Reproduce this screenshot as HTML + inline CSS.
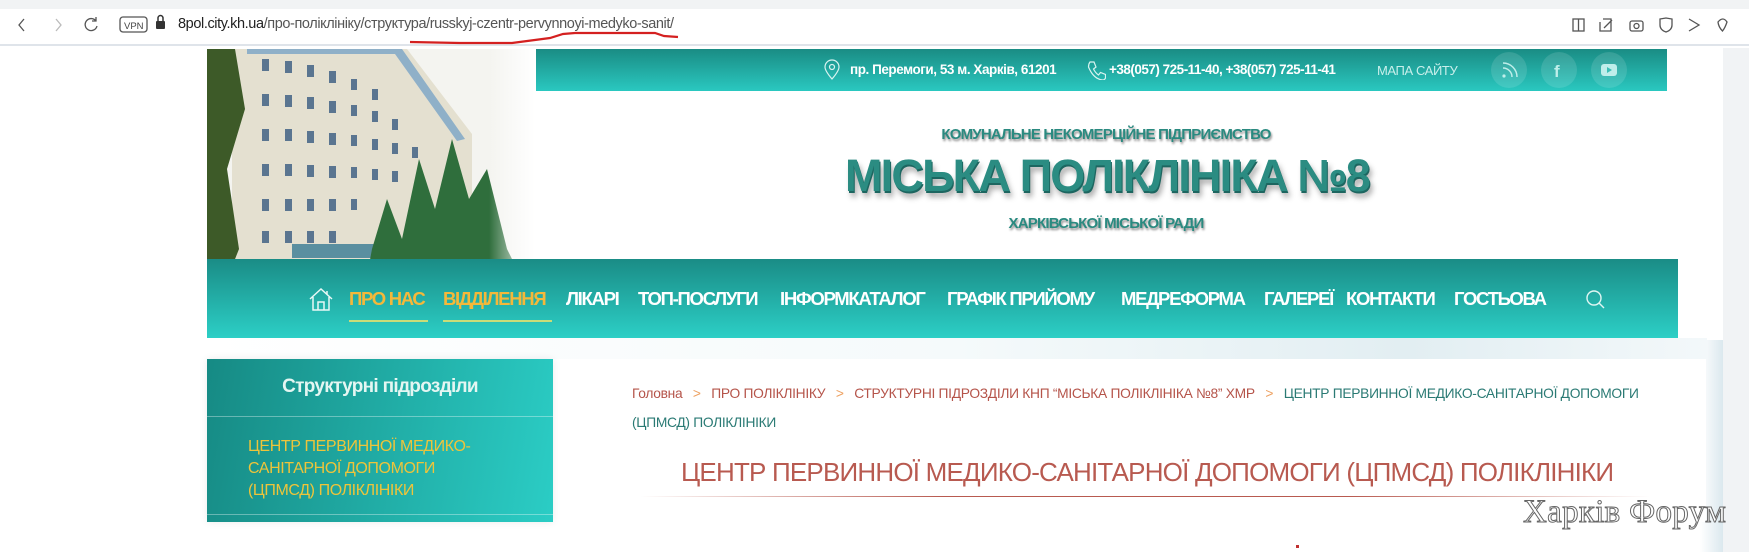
<!DOCTYPE html>
<html><head><meta charset="utf-8"><style>
*{margin:0;padding:0;box-sizing:border-box}
body{width:1749px;height:552px;overflow:hidden;background:#fff;font-family:"Liberation Sans","DejaVu Sans",sans-serif;position:relative}
.a{position:absolute;white-space:nowrap}
.nav span{position:absolute;top:288px;font-weight:bold;font-size:18.5px;letter-spacing:-1.3px;color:#fff}
.bc{font-size:13.8px;letter-spacing:-0.3px}
</style></head><body>
<div class="a" style="left:0;top:0;width:1749px;height:9px;background:#f1f3f4"></div>
<div class="a" style="left:0;top:9px;width:1749px;height:37px;background:#fff;border-bottom:2px solid #dfe4ea"></div>
<svg class="a" style="left:0;top:0" width="1749" height="50">
<g fill="none" stroke="#555" stroke-width="1.3">
<path d="M24 19 L19 25 L24 31"/>
<path d="M56 19 L61 25 L56 31" stroke="#bbb"/>
<path d="M96 21 A6 6 0 1 0 97 26 M96 17 L96 21 L92 21"/>
<rect x="120" y="17" width="27" height="15" rx="3"/>
<rect x="1573" y="19" width="11" height="12"/><path d="M1578.5 19 V31"/>
<path d="M1603 19 h8 v12 h-11 v-9 M1604 28 l8 -8"/>
<rect x="1630" y="21" width="13" height="10" rx="2"/><circle cx="1636.5" cy="26" r="2.5"/>
<path d="M1660 19 l6 -1 l6 1 v6 q0 5 -6 7 q-6 -2 -6 -7z"/>
<path d="M1689 19 l10 6 l-10 6"/>
<path d="M1718 22 q5 -6 9 0 q-2 6 -4.5 9 q-4 -4 -4.5 -9z"/>
</g>
<text x="124" y="29" font-size="9.5" font-family="Liberation Sans" fill="#444">VPN</text>
<rect x="156" y="21" width="9" height="8" rx="1" fill="#333"/><path d="M158 21 v-3 a2.5 2.5 0 0 1 5 0 v3" fill="none" stroke="#333" stroke-width="1.5"/>
<path d="M410 42 L460 43 L512 43 L550 38 L563 34 L575 33 L655 33 L664 36 L678 37" fill="none" stroke="#d42020" stroke-width="2.2"/>
</svg>
<div class="a" style="left:178px;top:16px;font-size:14.5px;color:#555;letter-spacing:-0.4px"><span style="color:#222">8pol.city.kh.ua</span>/про-поліклініку/структура/russkyj-czentr-pervynnoyi-medyko-sanit/</div>
<div class="a" style="left:1723px;top:48px;width:26px;height:504px;background:#f1f3f5"></div>
<div class="a" style="left:1700px;top:340px;width:23px;height:212px;background:linear-gradient(90deg,#fff,#dbe8ee)"></div>
<svg class="a" style="left:207px;top:49px" width="328" height="281">
<defs><linearGradient id="sky" x1="0" x2="1"><stop offset="0.86" stop-color="#fff" stop-opacity="0"/><stop offset="1" stop-color="#fff"/></linearGradient></defs>
<rect width="328" height="281" fill="#f4f4f0"/>
<polygon points="25,0 200,0 265,85 265,240 25,250" fill="#e4e0d0"/>
<polygon points="40,0 195,0 258,90 250,92 188,5 40,5" fill="#8fb0c8"/>
<g fill="#5a7590">
<rect x="55" y="10" width="7" height="12"/><rect x="78" y="12" width="7" height="12"/><rect x="100" y="16" width="7" height="12"/><rect x="122" y="22" width="7" height="12"/><rect x="144" y="30" width="6" height="11"/><rect x="165" y="40" width="6" height="11"/>
<rect x="55" y="45" width="7" height="12"/><rect x="78" y="46" width="7" height="12"/><rect x="100" y="48" width="7" height="12"/><rect x="122" y="52" width="7" height="12"/><rect x="144" y="56" width="6" height="11"/><rect x="165" y="62" width="6" height="11"/><rect x="185" y="70" width="6" height="11"/>
<rect x="55" y="80" width="7" height="12"/><rect x="78" y="80" width="7" height="12"/><rect x="100" y="82" width="7" height="12"/><rect x="122" y="84" width="7" height="12"/><rect x="144" y="86" width="6" height="11"/><rect x="165" y="90" width="6" height="11"/><rect x="185" y="94" width="6" height="11"/><rect x="205" y="98" width="6" height="11"/>
<rect x="55" y="115" width="7" height="12"/><rect x="78" y="115" width="7" height="12"/><rect x="100" y="116" width="7" height="12"/><rect x="122" y="117" width="7" height="12"/><rect x="144" y="118" width="6" height="11"/><rect x="165" y="120" width="6" height="11"/><rect x="185" y="122" width="6" height="11"/>
<rect x="55" y="150" width="7" height="12"/><rect x="78" y="150" width="7" height="12"/><rect x="100" y="150" width="7" height="12"/><rect x="122" y="150" width="7" height="12"/><rect x="144" y="150" width="6" height="11"/>
<rect x="55" y="182" width="7" height="12"/><rect x="78" y="182" width="7" height="12"/><rect x="100" y="182" width="7" height="12"/><rect x="122" y="182" width="7" height="12"/>
</g>
<rect x="85" y="195" width="100" height="14" fill="#5a8fa0"/>
<path d="M0 0 L28 0 L38 60 L20 120 L32 200 L0 281z" fill="#3d5a28"/>
<path d="M150 281 L165 200 L180 150 L195 190 L212 110 L228 160 L245 90 L262 150 L280 120 L300 200 L320 240 L328 281z" fill="#2f6e3c"/>
<path d="M0 281 L0 235 Q80 205 160 225 Q230 205 328 245 L328 281z" fill="#6a9c3a"/>
<rect width="328" height="281" fill="url(#sky)"/>
</svg>
<div class="a" style="left:536px;top:49px;width:1131px;height:42px;background:linear-gradient(180deg,#1a8c84,#2ac8c0)"></div>
<svg class="a" style="left:822px;top:59px" width="20" height="22"><path d="M10 20 C4 13 3 10 3 8 a7 7 0 0 1 14 0 c0 2 -1 5 -7 12z M10 5.5 a2.5 2.5 0 1 1 0 5 a2.5 2.5 0 1 1 0 -5" fill="none" stroke="#d8f3f0" stroke-width="1.2"/></svg>
<div class="a" style="left:850px;top:62px;font-size:13.5px;font-weight:bold;color:#fff;letter-spacing:-0.45px">пр. Перемоги, 53 м. Харків, 61201</div>
<svg class="a" style="left:1086px;top:60px" width="20" height="20"><path d="M4 2 l4 0 l2 5 l-2.5 2 q2 4 5 6 l2 -2.5 l5 2 v3.5 q-1 2 -3 2 q-9 -1 -14 -13 q0 -3 1.5 -5z" fill="none" stroke="#d8f3f0" stroke-width="1.2"/></svg>
<div class="a" style="left:1109px;top:62px;font-size:13.5px;font-weight:bold;color:#fff;letter-spacing:-0.5px">+38(057) 725-11-40, +38(057) 725-11-41</div>
<div class="a" style="left:1377px;top:63px;font-size:13px;color:#c8efeb;letter-spacing:-0.4px">МАПА САЙТУ</div>
<div class="a" style="left:1491px;top:52px;width:36px;height:36px;border-radius:50%;background:rgba(255,255,255,.12)"></div>
<div class="a" style="left:1541px;top:52px;width:36px;height:36px;border-radius:50%;background:rgba(255,255,255,.12)"></div>
<div class="a" style="left:1591px;top:52px;width:36px;height:36px;border-radius:50%;background:rgba(255,255,255,.12)"></div>
<svg class="a" style="left:1491px;top:52px" width="140" height="36">
<g fill="none" stroke="#bfeeea" stroke-width="1.5"><path d="M12 16 a9 9 0 0 1 9 9 M12 11 a14 14 0 0 1 14 14"/></g><circle cx="13" cy="24" r="1.6" fill="#bfeeea"/>
<text x="63" y="25" font-size="17" font-weight="bold" fill="#bfeeea" font-family="Liberation Sans">f</text>
<rect x="110" y="12" width="16" height="12" rx="3" fill="#bfeeea"/><path d="M116 15 v6 l5 -3z" fill="#3cbfb6"/>
</svg>
<div class="a" style="left:0;width:2212px;top:126px;text-align:center;font-size:15px;font-weight:bold;color:#2a8a80;letter-spacing:-0.8px;text-shadow:1px 2px 2px #888">КОМУНАЛЬНЕ НЕКОМЕРЦІЙНЕ ПІДПРИЄМСТВО</div>
<div class="a" style="left:0;width:2214px;top:150px;text-align:center;font-size:45px;font-weight:bold;color:#2b8c82;letter-spacing:-1.8px;text-shadow:1px 2px 0 #1d6660,3px 6px 6px #aaa">МІСЬКА ПОЛІКЛІНІКА №8</div>
<div class="a" style="left:0;width:2212px;top:215px;text-align:center;font-size:15px;font-weight:bold;color:#2a8a80;letter-spacing:-0.8px;text-shadow:1px 2px 2px #888">ХАРКІВСЬКОЇ МІСЬКОЇ РАДИ</div>
<div class="a" style="left:207px;top:259px;width:1471px;height:79px;background:linear-gradient(180deg,#1a8c86,#2ccfc6)"></div>
<div class="a" style="left:207px;top:338px;width:1500px;height:21px;background:linear-gradient(90deg,#fff,#f5fafb 50%,#e2eef2 80%,#f3f8fa)"></div>
<svg class="a" style="left:308px;top:286px" width="26" height="26"><path d="M2 13 L13 3 L24 13 M5 11 V24 H21 V11 M10 24 V16 H16 V24 M19 5 V8" fill="none" stroke="#e8f8f6" stroke-width="1.5"/></svg>
<div class="nav">
<span style="left:349px;color:#f4b83a">ПРО НАС</span>
<span style="left:443px;color:#f4b83a">ВІДДІЛЕННЯ</span>
<span style="left:566px">ЛІКАРІ</span>
<span style="left:638px">ТОП-ПОСЛУГИ</span>
<span style="left:780px">ІНФОРМКАТАЛОГ</span>
<span style="left:947px">ГРАФІК ПРИЙОМУ</span>
<span style="left:1121px">МЕДРЕФОРМА</span>
<span style="left:1264px">ГАЛЕРЕЇ</span>
<span style="left:1346px">КОНТАКТИ</span>
<span style="left:1454px">ГОСТЬОВА</span>
</div>
<div class="a" style="left:349px;top:320px;width:79px;height:2px;background:#c9dc78"></div>
<div class="a" style="left:443px;top:320px;width:109px;height:2px;background:#c9dc78"></div>
<svg class="a" style="left:1585px;top:289px" width="22" height="22"><circle cx="9" cy="9" r="7" fill="none" stroke="#e0f6f3" stroke-width="1.4"/><path d="M14 14 L19 19" stroke="#e0f6f3" stroke-width="1.4"/></svg>
<div class="a" style="left:207px;top:359px;width:346px;height:163px;background:linear-gradient(100deg,#168a84,#2bcdc5);box-shadow:0 0 8px rgba(0,0,0,.08)"></div>
<div class="a" style="left:207px;top:376px;width:346px;text-align:center;font-size:19px;font-weight:bold;color:#e4f6f2;letter-spacing:-0.7px">Структурні підрозділи</div>
<div class="a" style="left:207px;top:416px;width:346px;height:1px;background:rgba(255,255,255,.35)"></div>
<div class="a" style="left:248px;top:436px;font-size:16px;line-height:22px;color:#eec43a;letter-spacing:-0.4px">ЦЕНТР ПЕРВИННОЇ МЕДИКО-<br>САНІТАРНОЇ ДОПОМОГИ<br>(ЦПМСД) ПОЛІКЛІНІКИ</div>
<div class="a" style="left:207px;top:514px;width:346px;height:1px;background:rgba(255,255,255,.35)"></div>
<div class="a" style="left:592px;top:359px;width:1114px;height:163px;background:#fff"></div>
<div class="a bc" style="left:632px;top:386px;color:#b5544a">Головна <span style="color:#eda060">&nbsp;&nbsp;&gt;&nbsp;&nbsp;</span> ПРО ПОЛІКЛІНІКУ <span style="color:#eda060">&nbsp;&nbsp;&gt;&nbsp;&nbsp;</span> СТРУКТУРНІ ПІДРОЗДІЛИ КНП “МІСЬКА ПОЛІКЛІНІКА №8” ХМР <span style="color:#eda060">&nbsp;&nbsp;&gt;&nbsp;&nbsp;</span> <span style="color:#2a7a74">ЦЕНТР ПЕРВИННОЇ МЕДИКО-САНІТАРНОЇ ДОПОМОГИ</span></div>
<div class="a bc" style="left:632px;top:415px;color:#2a7a74">(ЦПМСД) ПОЛІКЛІНІКИ</div>
<div class="a" style="left:681px;top:457px;font-size:26px;color:#b85a50;letter-spacing:-0.8px">ЦЕНТР ПЕРВИННОЇ МЕДИКО-САНІТАРНОЇ ДОПОМОГИ (ЦПМСД) ПОЛІКЛІНІКИ</div>
<div class="a" style="left:640px;top:496px;width:1010px;height:1px;background:linear-gradient(90deg,rgba(184,90,80,0),#b85a50 30%,#b85a50 70%,rgba(184,90,80,0))"></div>
<div class="a" style="left:1296px;top:545px;width:3px;height:3px;background:#c03030"></div>
<div class="a" style="left:1523px;top:494px;font-family:'Liberation Serif',serif;font-size:33px;color:#fff;-webkit-text-stroke:1px #666;letter-spacing:0.3px">Харків Форум</div>
</body></html>
